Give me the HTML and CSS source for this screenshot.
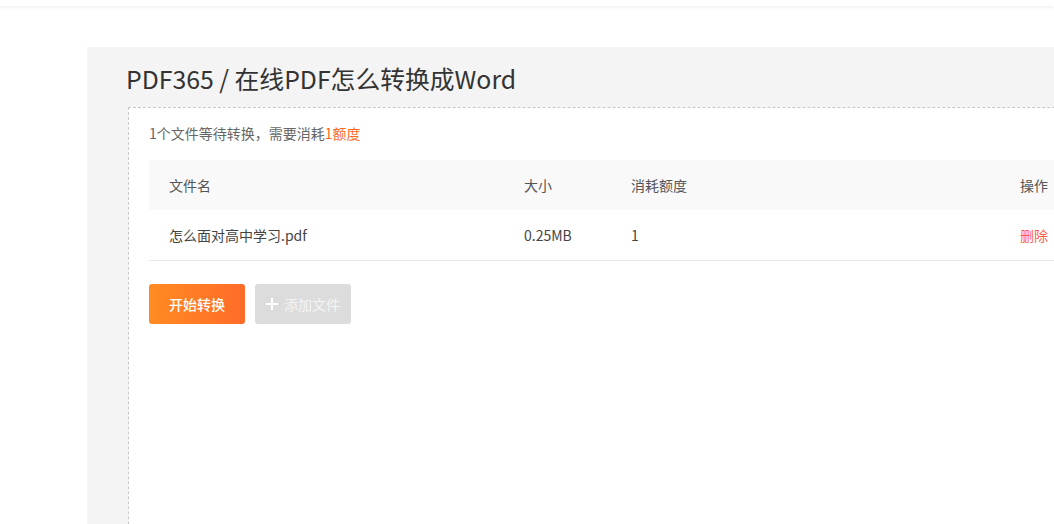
FILE: index.html
```html
<!DOCTYPE html>
<html lang="zh-CN">
<head>
<meta charset="utf-8">
<title>PDF365 在线PDF怎么转换成Word</title>
<link rel="stylesheet" href="styles.css">
</head>
<body>
<header class="topbar"></header>
<main class="page">
  <section class="panel">
    <h1 class="title">PDF365 / 在线PDF怎么转换成Word</h1>
    <div class="dropbox">
      <p class="summary">1个文件等待转换，需要消耗<span class="accent">1额度</span></p>
      <div class="table">
        <div class="row head">
          <div class="cell">文件名</div>
          <div class="cell">大小</div>
          <div class="cell">消耗额度</div>
          <div class="cell">操作</div>
        </div>
        <div class="row body">
          <div class="cell">怎么面对高中学习.pdf</div>
          <div class="cell">0.25MB</div>
          <div class="cell">1</div>
          <div class="cell"><a class="del">删除</a></div>
        </div>
      </div>
      <div class="actions">
        <button class="btn primary">开始转换</button>
        <button class="btn disabled"><svg class="plus" viewBox="0 0 12 12" width="12" height="12"><path d="M6 0v12M0 6h12" stroke="#fff" stroke-width="2" fill="none"/></svg>添加文件</button>
      </div>
    </div>
  </section>
</main>
</body>
</html>
```
FILE: styles.css
```css
html, body {
  margin: 0;
  padding: 0;
  background: #fff;
  overflow: hidden;
  font-family: "Noto Sans CJK SC", "Microsoft YaHei", sans-serif;
  color: #333;
}
.topbar {
  height: 6px;
  background: #fff;
  box-shadow: 0 1px 4px rgba(0,0,0,0.08);
  position: relative;
  z-index: 1;
}
.page {
  padding-top: 41px;
  padding-left: 87px;
  width: 1300px;
}
.panel {
  background: #f4f4f4;
  padding: 0 0 0 41px;
  height: 600px;
}
.title {
  margin: 0 0 0 -2px;
  font-size: 24.8px;
  font-weight: 400;
  line-height: 30px;
  padding-top: 16px;
  height: 44px;
  color: #333;
}
.dropbox {
  background: #fff;
  border: 1px dashed #c8c8c8;
  padding: 15px 20px 0 20px;
  height: 600px;
  width: 1100px;
}
.summary {
  margin: 0;
  font-size: 14px;
  line-height: 20px;
  color: #666;
}
.accent { color: #ff6a1f; }
.table {
  margin-top: 17px;
  width: 1000px;
}
.row {
  display: grid;
  grid-template-columns: 355px 107px 389px 1fr;
  font-size: 14px;
}
.row.head {
  background: #f9f9f9;
  height: 50px;
  align-items: center;
  color: #555;
}
.row.body {
  height: 50px;
  align-items: center;
  border-bottom: 1px solid #e8e8e8;
  color: #444;
}
.cell {
  padding-left: 20px;
}
.del { color: #ff5c4d; }
.actions {
  margin-top: 23px;
  display: flex;
  gap: 10px;
}
.btn {
  width: 96px;
  height: 40px;
  border: none;
  border-radius: 3px;
  font-family: inherit;
  font-size: 14px;
  color: #fff;
  display: flex;
  align-items: center;
  justify-content: center;
  padding: 0;
}
.btn.primary {
  background: linear-gradient(90deg, #ff8b22, #ff6b2a);
  font-weight: 500;
}
.btn.disabled {
  background: #dcdcdc;
  color: #f4f4f4;
  gap: 6px;
}
.plus { display: block; }
```
